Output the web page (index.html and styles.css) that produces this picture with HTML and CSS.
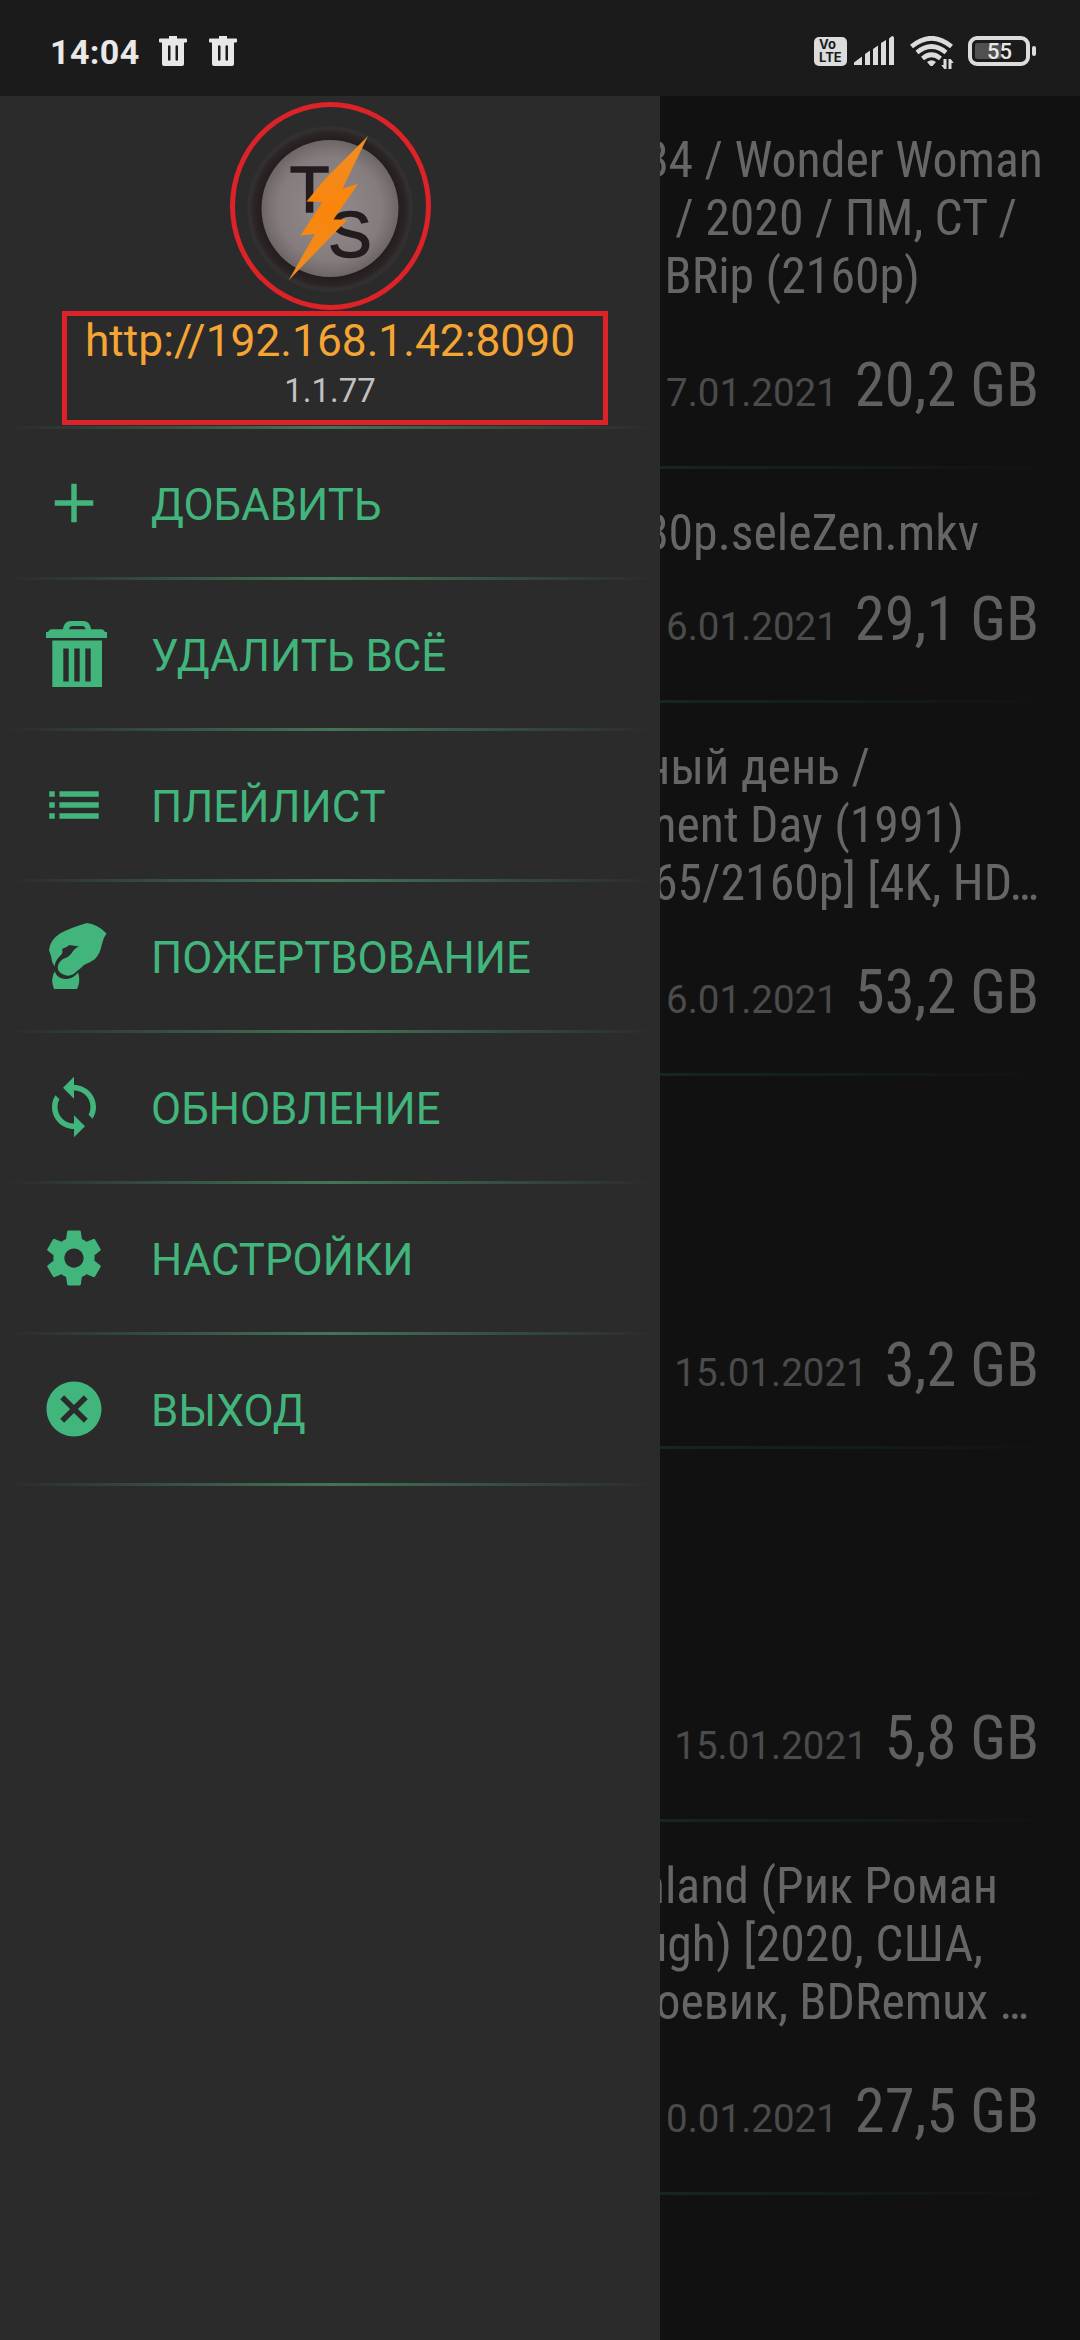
FILE: index.html
```html
<!DOCTYPE html>
<html lang="ru">
<head>
<meta charset="utf-8">
<title>TorrServer</title>
<link rel="stylesheet" href="styles.css">
</head>
<body>
<header class="status">
  <span class="clock">14:04</span>
  <svg class="mini-trash" viewBox="0 0 28 30"><path fill-rule="evenodd" d="M10 0h8v2.5h9a1 1 0 0 1 1 1v2a1 1 0 0 1-1 1h-2V28a2 2 0 0 1-2 2H5a2 2 0 0 1-2-2V6.500H1a1 1 0 0 1-1-1v-2a1 1 0 0 1 1-1h9zM9 10.500v13a1 1 0 0 0 2.500 0v-13a1 1 0 0 0-2.500 0zm7.500 0v13a1 1 0 0 0 2.500 0v-13a1 1 0 0 0-2.500 0z"/></svg>
  <svg class="mini-trash" viewBox="0 0 28 30"><path fill-rule="evenodd" d="M10 0h8v2.5h9a1 1 0 0 1 1 1v2a1 1 0 0 1-1 1h-2V28a2 2 0 0 1-2 2H5a2 2 0 0 1-2-2V6.500H1a1 1 0 0 1-1-1v-2a1 1 0 0 1 1-1h9zM9 10.500v13a1 1 0 0 0 2.500 0v-13a1 1 0 0 0-2.500 0zm7.500 0v13a1 1 0 0 0 2.500 0v-13a1 1 0 0 0-2.500 0z"/></svg>
  <div class="indicators">
    <span class="volte"><span>Vo</span><span>LTE</span></span>
    <svg class="signal" viewBox="0 0 40 30"><path d="M0 29v-2.500l8-6V29zM11 29V18l5-3.500V29zM19 29V13l5-3.500V29zM27 29V7l5-3v25zM35 29V2.500L38 0q2 0 2 2v27z"/></svg>
    <svg class="wifi" viewBox="0 0 44 34"><g fill="none" stroke="#dcdcdc" stroke-width="4.600"><path d="M1.500 10.500Q21.500-6 41.500 10.500M7 16.500Q21.500 4.500 36 16.500M12.500 22.500Q21.500 15 30.500 22.500"/></g><path d="M17 26q4.500-3.500 9 0l-3.500 4h-2z"/><path d="M36.500 23v10h-2.200l-3-4h2.200v-6zM38.500 33V23h2.200l3 4h-2.200v6z"/></svg>
    <span class="battery"><span class="charge"></span><b>55</b></span>
  </div>
</header>

<main class="screen">
  <nav class="drawer">
    <div class="brand">
      <svg class="logo" viewBox="0 0 172 172">
        <defs>
          <radialGradient id="rim"><stop offset=".8" stop-color="#221c1d"/><stop offset=".91" stop-color="#2b2526"/><stop offset=".96" stop-color="#343132"/><stop offset="1" stop-color="#2b2b2b"/></radialGradient>
          <radialGradient id="face"><stop offset="0" stop-color="#938b8b"/><stop offset=".75" stop-color="#857c7d"/><stop offset="1" stop-color="#6d6667"/></radialGradient>
          <linearGradient id="bolt" x1="0" y1="0" x2="0" y2="1"><stop offset="0" stop-color="#ef8d25"/><stop offset=".5" stop-color="#fa850b"/><stop offset="1" stop-color="#ee8c22"/></linearGradient>
        </defs>
        <circle cx="86" cy="86" r="84" fill="url(#rim)"/>
        <circle cx="86" cy="85.500" r="68.500" fill="url(#face)"/>
        <text class="mono-letter" x="65.500" y="89">T</text>
        <text class="mono-letter" x="106" y="133.500">S</text>
        <path fill="url(#bolt)" d="M124 13 98.500 65.500 114 61 89.500 96.500 103.500 96.500 44.500 157.500 71 111 56.500 112.500 78.500 79 62.500 78.500 81 56Z"/>
      </svg>
      <div class="address">http://192.168.1.42:8090</div>
      <div class="version">1.1.77</div>
      <span class="mark-ring"></span>
      <span class="mark-box"></span>
    </div>
    <a class="item"><svg class="icon" viewBox="0 0 24 24"><path d="M19 13h-6v6h-2v-6H5v-2h6V5h2v6h6z"/></svg><span>ДОБАВИТЬ</span></a>
    <a class="item"><svg class="icon bin" viewBox="0 0 61 66"><path fill-rule="evenodd" d="M3 9.500Q4 8.300 6 8.300H17Q18 0 25 0H37Q44 0 45 8.300H55Q57 8.300 58 9.500L59 11h2v6H0v-6h2zM23 8.300H39.500Q39 5 36 5H27Q23.500 5 23 8.300zM6.300 19.500H56V66H6.300zM17.300 27.500V60.500h5.400v-33zm11 0V60.500h5.400v-33zm11 0V60.500h5.400v-33z"/></svg><span>УДАЛИТЬ ВСЁ</span></a>
    <a class="item"><svg class="icon" viewBox="0 0 24 24"><path d="M3 13h2v-2H3zM3 17h2v-2H3zM3 9h2V7H3zM6.700 13H21v-2H6.700zM6.700 17H21v-2H6.700zM6.700 7v2H21V7z"/></svg><span>ПЛЕЙЛИСТ</span></a>
    <a class="item"><svg class="icon hand" viewBox="0 0 58 66"><path d="M38 0Q49.500 1.500 57.500 10.500Q54 15 53 21Q51 31 46 36Q42 39 35 42Q31 46 28 48Q23 53.500 17.500 52.500Q8.500 50.500 8.700 44Q9.500 39 14 36Q22 33 24 28Q27 24 30 23.500L20 22L18.500 23.500L13 26Q14.500 30 11 33Q6 38 5.500 43.500Q2.500 39 2 33L0 27Q1 17 11 10.500Q22 4.500 38 0Z"/><path d="M5.700 48.500Q9 56.500 17.500 56Q24 56 29 49.500Q32 58 28 66H5Q1 56 5.700 48.500Z"/></svg><span>ПОЖЕРТВОВАНИЕ</span></a>
    <a class="item"><svg class="icon" viewBox="0 0 24 24"><path d="M12 4V1L8 5l4 4V6c3.310 0 6 2.690 6 6 0 1.010-.25 1.970-.7 2.800l1.460 1.460C19.540 15.030 20 13.570 20 12c0-4.420-3.580-8-8-8zm0 14c-3.310 0-6-2.690-6-6 0-1.010.25-1.970.7-2.800L5.240 7.740C4.460 8.970 4 10.430 4 12c0 4.420 3.580 8 8 8v3l4-4-4-4v3z"/></svg><span>ОБНОВЛЕНИЕ</span></a>
    <a class="item"><svg class="icon" viewBox="0 0 24 24"><path d="M19.430 12.980c.04-.32.07-.64.07-.98s-.03-.66-.07-.98l2.110-1.650c.19-.15.24-.42.12-.64l-2-3.460c-.12-.22-.39-.3-.61-.22l-2.490 1c-.52-.4-1.080-.73-1.690-.98l-.38-2.650C14.460 2.180 14.250 2 14 2h-4c-.25 0-.46.18-.49.42l-.38 2.650c-.61.25-1.170.59-1.690.98l-2.490-1c-.23-.09-.49 0-.61.22l-2 3.460c-.13.22-.07.49.12.64l2.110 1.650c-.04.32-.07.65-.07.98s.03.66.07.98l-2.110 1.650c-.19.15-.24.42-.12.64l2 3.460c.12.22.39.3.61.22l2.490-1c.52.4 1.080.73 1.690.98l.38 2.650c.03.24.24.42.49.42h4c.25 0 .46-.18.49-.42l.38-2.650c.61-.25 1.170-.59 1.690-.98l2.490 1c.23.09.49 0 .61-.22l2-3.460c.12-.22.07-.49-.12-.64l-2.110-1.650zM12 15.500c-1.930 0-3.500-1.570-3.500-3.500s1.570-3.500 3.500-3.500 3.500 1.570 3.500 3.500-1.570 3.500-3.500 3.500z"/></svg><span>НАСТРОЙКИ</span></a>
    <a class="item"><svg class="icon" viewBox="0 0 24 24"><path d="M12 2C6.470 2 2 6.470 2 12s4.470 10 10 10 10-4.470 10-10S17.530 2 12 2zm5 13.590L15.590 17 12 13.410 8.410 17 7 15.590 10.590 12 7 8.410 8.410 7 12 10.590 15.590 7 17 8.410 13.410 12 17 15.590z"/></svg><span>ВЫХОД</span></a>
  </nav>

  <section class="torrents">
    <article class="torrent">
      <h2><span class="l1a">84 / Wonder Woman</span><span class="l1b">/ 2020 / ПМ, СТ /</span><span class="l1c">BRip (2160p)</span></h2>
      <p><time>7.01.2021</time><strong>20,2 GB</strong></p>
    </article>
    <article class="torrent short">
      <h2><span class="l2a">80p.seleZen.mkv</span></h2>
      <p><time>6.01.2021</time><strong>29,1 GB</strong></p>
    </article>
    <article class="torrent">
      <h2><span class="l3a">ный день /</span><span class="l3b">ment Day (1991)</span><span class="l3c">65/2160p] [4K, HD…</span></h2>
      <p><time>6.01.2021</time><strong>53,2 GB</strong></p>
    </article>
    <article class="torrent">
      <h2></h2>
      <p><time>15.01.2021</time><strong>3,2 GB</strong></p>
    </article>
    <article class="torrent">
      <h2></h2>
      <p><time>15.01.2021</time><strong>5,8 GB</strong></p>
    </article>
    <article class="torrent">
      <h2><span class="l6a">nland (Рик Роман</span><span class="l6b">ugh) [2020, США,</span><span class="l6c">оевик, BDRemux …</span></h2>
      <p><time>0.01.2021</time><strong>27,5 GB</strong></p>
    </article>
  </section>
</main>
</body>
</html>
```
FILE: styles.css
```css
* { box-sizing: border-box; }
body {
  margin: 0;
  width: 1080px;
  height: 2340px;
  overflow: hidden;
  background: #111;
  font-family: Roboto, "Noto Sans", sans-serif;
}
svg { display: block; flex: none; }

/* Status bar */
.status {
  display: flex;
  align-items: flex-start;
  height: 96px;
  padding: 36px 44px 0 50px;
  background: #1b1b1b;
  color: #e8e8e8;
  fill: #e8e8e8;
}
.clock {
  width: 109px;
  font-size: 34px;
  font-weight: 700;
  line-height: 32px;
  letter-spacing: .4px;
}
.mini-trash { width: 28px; height: 30px; margin-right: 22px; }
.indicators {
  display: flex;
  margin-left: auto;
  fill: #dcdcdc;
}
.volte {
  display: flex;
  flex-direction: column;
  width: 33px;
  height: 29px;
  margin: 1px 7px 0 0;
  padding: 1px 0 0 5px;
  border-radius: 5px;
  background: #dcdcdc;
  color: #1b1b1b;
  font: 700 13px/13px Inter, sans-serif;
}
.signal { width: 40px; height: 30px; margin-right: 16px; }
.wifi { width: 44px; height: 34px; margin-right: 14px; }
.battery {
  position: relative;
  width: 62px;
  height: 30px;
  margin-right: 6px;
  padding: 3px;
  border: 4px solid #dcdcdc;
  border-radius: 9px;
}
.battery::after {
  content: "";
  position: absolute;
  right: -10px;
  top: 6px;
  width: 4px;
  height: 10px;
  border-radius: 2px;
  background: #dcdcdc;
}
.charge { display: block; width: 26px; height: 16px; border-radius: 2px; background: #505050; }
.battery b {
  position: absolute;
  left: 15px;
  top: 1px;
  font-size: 22px;
  line-height: 21px;
  font-weight: 500;
}

.screen { display: grid; grid-template-columns: 660px 420px; height: 2244px; }

/* Drawer */
.drawer { background: #2b2b2b; }
.brand {
  position: relative;
  display: flex;
  flex-direction: column;
  align-items: center;
  height: 333px;
  padding-top: 27px;
}
.logo { width: 172px; height: 172px; }
.mono-letter {
  font: 65px "Liberation Sans", sans-serif;
  text-anchor: middle;
  fill: #231c1e;
  stroke: #231c1e;
  stroke-width: 1.500px;
}
.address { margin-top: 20px; font-size: 44.300px; line-height: 52px; color: #f5a534; }
.version { margin-top: 5px; font-size: 33px; line-height: 38px; color: #c0c0c0; }
.brand::after, .item::after {
  content: "";
  position: absolute;
  left: 0;
  right: 0;
  bottom: 0;
  height: 3px;
  background: linear-gradient(90deg, #2b2b2b 1%, #42755a 50%, #2b2b2b 99%);
}
.mark-ring {
  position: absolute;
  left: 230px;
  top: 6px;
  width: 201px;
  height: 208px;
  border: 5px solid #dd2228;
  border-radius: 50%;
}
.mark-box {
  position: absolute;
  left: 62px;
  top: 215px;
  width: 546px;
  height: 114px;
  border: 5px solid #dd2228;
}
.item {
  position: relative;
  display: flex;
  align-items: center;
  height: 151px;
  padding: 0 0 3px 41px;
  color: #42b57c;
  fill: #42b57c;
  font-size: 43.800px;
}
.item span { padding-top: 3px; }
.icon { width: 66px; height: 66px; margin-right: 44px; }
.bin { width: 61px; margin-left: 5px; }
.hand { width: 58px; margin-left: 8px; }

/* List behind the drawer */
.torrents { overflow: hidden; }
.torrent {
  position: relative;
  display: flex;
  flex-direction: column;
  justify-content: space-between;
  height: 373px;
  padding: 35px 0 46px;
}
.torrent.short { height: 234px; }
.torrent::after {
  content: "";
  position: absolute;
  left: 0;
  right: 0;
  bottom: 0;
  height: 3px;
  background: linear-gradient(90deg, #15271f, #111 95%);
}
.torrent h2 {
  display: flex;
  flex-direction: column;
  align-items: flex-end;
  margin: 0;
  font: 400 49.800px/58px "Roboto Condensed", Roboto, sans-serif;
  color: #666;
  white-space: nowrap;
}
.torrent p {
  display: flex;
  justify-content: flex-end;
  align-items: baseline;
  gap: 17px;
  margin: 0;
  padding-right: 41px;
  line-height: 60px;
  white-space: nowrap;
}
.torrent time { font-size: 38.500px; color: #4b4b4b; }
.torrent strong { font: 400 60.500px/60px "Roboto Condensed", Roboto, sans-serif; color: #606060; }
.l1a { margin-right: 37px; }
.l1b { margin-right: 63px; }
.l1c { margin-right: 160px; }
.l2a { margin-right: 101px; }
.l3a { margin-right: 210px; }
.l3b { margin-right: 116px; }
.l3c { margin-right: 41px; }
.l6a { margin-right: 82px; }
.l6b { margin-right: 97px; }
.l6c { margin-right: 51px; }
```
